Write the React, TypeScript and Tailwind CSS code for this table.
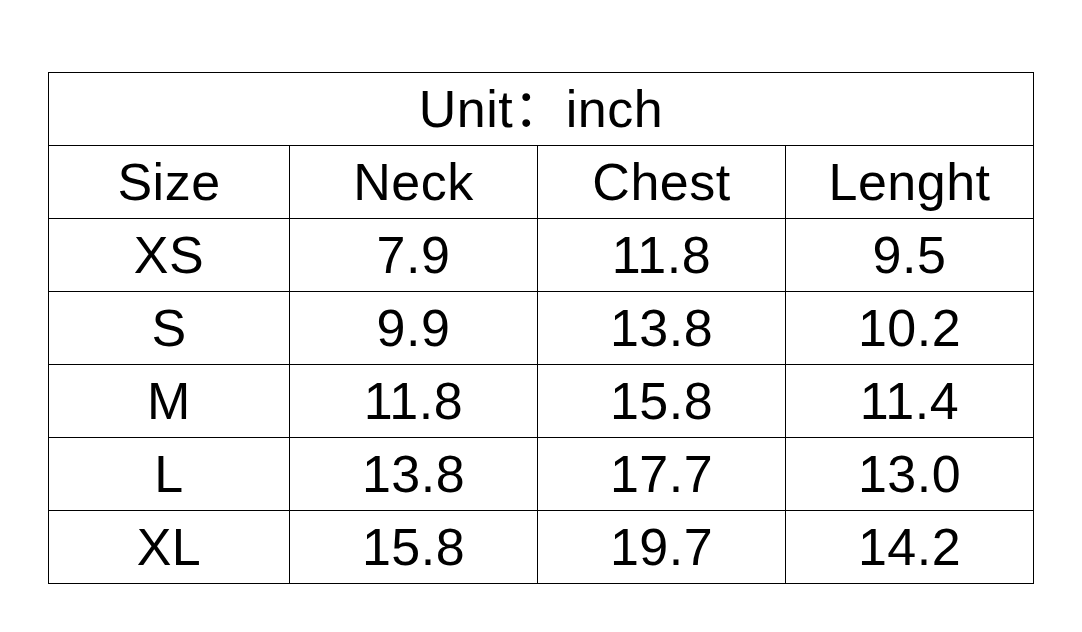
import React from 'react';

// Size chart rows: size, neck, chest, length
const rows = [
  ['XS', '7.9', '11.8', '9.5'],
  ['S', '9.9', '13.8', '10.2'],
  ['M', '11.8', '15.8', '11.4'],
  ['L', '13.8', '17.7', '13.0'],
  ['XL', '15.8', '19.7', '14.2'],
];

const headers = ['Size', 'Neck', 'Chest', 'Lenght'];

export default function App() {
  return (
    <div
      className="w-[1082px] h-[632px] bg-white pl-[48px] pt-[72px]"
      style={{ fontFamily: '"Liberation Sans", "Noto Sans CJK SC", sans-serif' }}
    >
      <table className="border-collapse text-black text-[52px] leading-none tracking-[0.5px]">
        <colgroup>
          <col className="w-[241px]" />
          <col className="w-[248px]" />
          <col className="w-[248px]" />
          <col className="w-[248px]" />
        </colgroup>
        <tbody>
          <tr className="h-[73px]">
            <td colSpan={4} className="border border-black text-center p-0">
              Unit：inch
            </td>
          </tr>
          <tr className="h-[73px]">
            {headers.map((h) => (
              <td key={h} className="border border-black text-center p-0">
                {h}
              </td>
            ))}
          </tr>
          {rows.map((r) => (
            <tr key={r[0]} className="h-[73px]">
              {r.map((c, i) => (
                <td key={i} className="border border-black text-center p-0">
                  {c}
                </td>
              ))}
            </tr>
          ))}
        </tbody>
      </table>
    </div>
  );
}
